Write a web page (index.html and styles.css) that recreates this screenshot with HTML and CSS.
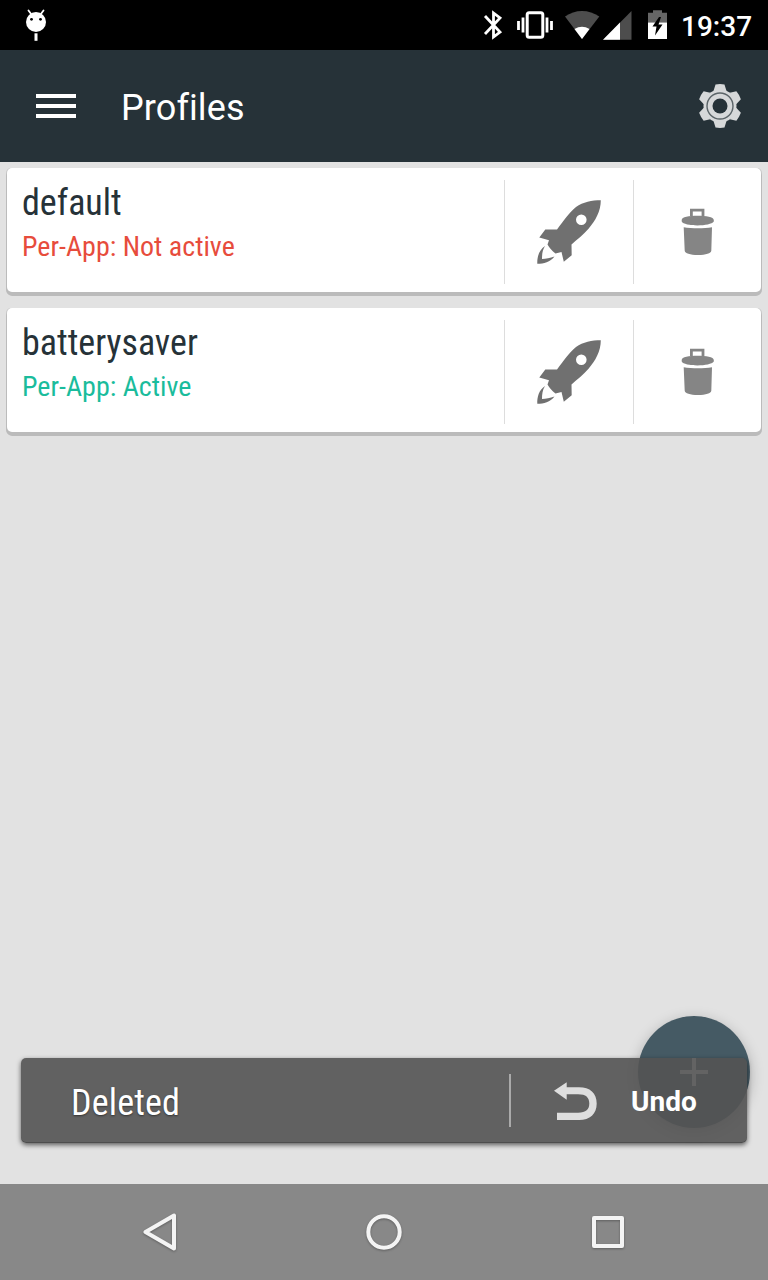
FILE: index.html
```html
<!DOCTYPE html>
<html lang="en">
<head>
<meta charset="utf-8">
<title>Profiles</title>
<link rel="stylesheet" href="styles.css">
</head>
<body>
<svg class="symbols" aria-hidden="true">
  <symbol id="rocket" viewBox="0 0 64 64">
    <path fill-rule="evenodd" d="M63.8 0.300C55 0.300 46 2 39 7C33 12 27 20 20 29.600L8.300 29.600L2.300 37.600L12 40.200L10.500 44.600C12.500 48 15 51 18.500 53.400L24.500 52L26.800 61.800L34.700 55.300L34.500 44.500C40 39.500 46 35 51.300 29C58.500 21 63.800 11 63.800 0.300ZM44.300 14.400A5.300 5.300 0 1 1 44.300 25A5.300 5.300 0 1 1 44.300 14.400Z"/>
    <path d="M8 46C2 50 0 57 0.300 63.800C7 63.800 13 62 17.500 56.500C13 58.200 9 58.700 5 59C5 54 5.500 50 8 46Z"/>
  </symbol>
  <symbol id="trash" viewBox="0 0 34 48">
    <path d="M10.400 8V2.100H22V8" fill="none" stroke="#858585" stroke-width="2.800"/>
    <path d="M.7 12C.7 9 8 7.700 16.500 7.700S32.800 9 32.800 12V13.500C31 16 24 17.400 16.500 17.400S2 16 .7 13.500ZM2.700 19.200C11 20.600 23 20.600 31 19.200L30.300 42.800C30 45.300 25 47 17 47S4 45.300 3.700 42.800Z"/>
  </symbol>
</svg>
<div class="screen">
  <header class="status-bar">
    <svg class="droid" width="24" height="34" viewBox="0 0 24 34" fill="#fff">
      <path d="M4.500 2.500L7.500 6.500M19.500 2.500L16.500 6.500" stroke="#fff" stroke-width="1.800" stroke-linecap="round"/>
      <circle cx="12" cy="14" r="10"/>
      <circle cx="7.500" cy="11.300" r="1.400" fill="#000"/><circle cx="16.500" cy="11.300" r="1.400" fill="#000"/>
      <rect x="10.500" y="25.300" width="3" height="7.500"/>
    </svg>
    <svg width="190" height="50" viewBox="480 0 190 50" fill="none">
      <path d="M485 16L500 32L493.500 37V13L500 18L485 34" stroke="#fff" stroke-width="2.800"/>
      <rect x="527.200" y="12.800" width="15.600" height="24.400" rx="2" stroke="#fff" stroke-width="3"/>
      <path d="M518.500 21V30M551.500 21V30M523 17.500V32.500M547 17.500V32.500" stroke="#fff" stroke-width="2.800"/>
      <path d="M582 39L565 16.500C575 9 589 9 599.300 16.500Z" fill="#4d4d4d"/>
      <path d="M582 39L574.500 29Q582 24.500 589.500 29Z" fill="#fff"/>
      <path d="M603 39.700L631.500 11V39.700Z" fill="#4d4d4d"/>
      <path d="M603 39.700L620 22.500V39.700Z" fill="#fff"/>
      <path d="M648 22.700V12.700H653V10.300H662V12.700H667V22.700Z" fill="#666"/>
      <path d="M648 22.500H667V39H648Z" fill="#fff"/>
      <path d="M659 17L652.500 26.500H656.500L655 35.500L662.500 24.500H658.500L661 17Z" fill="#000"/>
    </svg>
    <time class="clock">19:37</time>
  </header>
  <div class="app-bar">
    <div class="menu"><i></i><i></i><i></i></div>
    <h1>Profiles</h1>
    <svg class="gear" width="46" height="46" viewBox="-23 -23 46 46" fill="#d6d8d9">
      <circle r="16.500"/>
      <path id="tooth" d="M-6.500 -15L-4.500 -21.500Q0 -22.300 4.500 -21.500L6.500 -15Z"/>
      <use href="#tooth" transform="rotate(60)"/><use href="#tooth" transform="rotate(120)"/>
      <use href="#tooth" transform="rotate(180)"/><use href="#tooth" transform="rotate(240)"/>
      <use href="#tooth" transform="rotate(300)"/>
      <circle r="13" fill="none" stroke="#5b6468" stroke-width="1.400"/>
      <circle r="7.500" fill="#263238"/>
    </svg>
  </div>
  <main class="profiles">
    <article class="card">
      <div class="info"><h2>default</h2><p class="inactive">Per-App: Not active</p></div>
      <div class="action"><svg class="rocket"><use href="#rocket"/></svg></div>
      <div class="action"><svg class="trash"><use href="#trash"/></svg></div>
    </article>
    <article class="card">
      <div class="info"><h2>batterysaver</h2><p class="active">Per-App: Active</p></div>
      <div class="action"><svg class="rocket"><use href="#rocket"/></svg></div>
      <div class="action"><svg class="trash"><use href="#trash"/></svg></div>
    </article>
  </main>
  <div class="fab"><svg width="28" height="28" viewBox="0 0 28 28"><path d="M14 0V28M0 14H28" stroke="#fff" stroke-width="4"/></svg></div>
  <div class="toast">
    <span class="message">Deleted</span>
    <div class="undo">
      <svg width="44" height="40" viewBox="553 1081 44 40"><path fill="#dedede" d="M554 1090.700L566.700 1082.300V1087.300H579C590 1087.300 596.700 1093 596.700 1103.500S590 1120 579 1120H557V1112.700H578C586 1112.700 589.300 1109.500 589.300 1103.500S586 1094.300 578 1094.300H566.700V1099.700Z"/></svg>
      <b>Undo</b>
    </div>
  </div>
  <nav class="nav-bar">
    <svg width="768" height="96" viewBox="0 1184 768 96" fill="none" stroke="#f4f4f4" stroke-width="4" stroke-linejoin="round">
      <path d="M145.500 1232L174 1215.500V1248.500Z"/>
      <circle cx="384" cy="1232" r="15.700"/>
      <rect x="594" y="1218" width="28" height="28"/>
    </svg>
  </nav>
</div>
</body>
</html>
```
FILE: styles.css
```css
* { box-sizing: border-box; margin: 0; }
body { font-family: Roboto, sans-serif; }
svg { display: block; flex: none; }
.symbols { position: absolute; width: 0; height: 0; }
.screen {
  position: relative;
  display: flex;
  flex-direction: column;
  width: 768px;
  height: 1280px;
  overflow: hidden;
  background: #e2e2e2;
}
.status-bar {
  display: flex;
  align-items: center;
  height: 50px;
  padding: 0 16px 0 24px;
  background: #000;
}
.droid { margin-right: 432px; }
.clock {
  margin-left: 11px;
  color: #fff;
  font-size: 28px;
  font-weight: 500;
  line-height: 50px;
  padding-top: 4px;
}
.app-bar {
  display: flex;
  align-items: center;
  height: 112px;
  padding: 0 25px 0 36px;
  background: #263238;
}
.menu { display: flex; flex-direction: column; gap: 6px; width: 40px; }
.menu i { height: 4px; background: #fff; }
.app-bar h1 {
  flex: 1;
  margin-left: 45px;
  padding-top: 3px;
  color: #fff;
  font-size: 36px;
  font-weight: 400;
  letter-spacing: .1px;
  font-variant-ligatures: common-ligatures;
}
.profiles { flex: 1; padding: 6px 7px; }
.card {
  display: flex;
  height: 124px;
  margin-bottom: 16px;
  border-radius: 5px;
  background: #fff;
  box-shadow: 0 4px 0 #bbb, 1px 3px 0 #bbb, -1px 3px 0 #bbb, 1px 0 0 #c8c8c8, -1px 0 0 #c8c8c8;
}
.info {
  flex: 1;
  padding: 14px 0 0 15px;
  font-family: "Roboto Condensed", Roboto, sans-serif;
  font-stretch: condensed;
}
.info h2 { color: #263238; font-size: 36px; font-weight: 400; line-height: 42px; }
.info p { font-size: 28px; line-height: 33px; margin-top: 6px; }
.inactive { color: #e74c3c; }
.active { color: #1abc9c; }
.action {
  display: flex;
  justify-content: center;
  width: 129px;
  height: 104px;
  margin-top: 12px;
  padding-top: 20px;
  border-left: 1px solid #ddd;
}
.action:last-child { width: 128px; padding-top: 28px; }
.rocket { width: 64px; height: 64px; fill: #707070; }
.trash { width: 34px; height: 48px; fill: #858585; }
.fab {
  position: absolute;
  left: 638px;
  top: 1016px;
  display: flex;
  align-items: center;
  justify-content: center;
  width: 112px;
  height: 112px;
  border-radius: 50%;
  background: #455a64;
  box-shadow: 0 4px 14px rgba(0, 0, 0, .25);
}
.toast {
  position: absolute;
  left: 21px;
  top: 1058px;
  display: flex;
  align-items: center;
  width: 726px;
  height: 85px;
  padding-left: 50px;
  border-radius: 5px;
  background: rgba(84, 84, 84, .91);
  box-shadow: 0 2px 5px rgba(0, 0, 0, .6), inset 0 -1px 0 rgba(0, 0, 0, .2);
  color: #fff;
}
.message {
  flex: 1;
  padding-top: 4px;
  font-family: "Roboto Condensed", Roboto, sans-serif;
  font-stretch: condensed;
  font-size: 36px;
  letter-spacing: .15px;
  text-shadow: 0 1px 2px #333;
}
.undo {
  display: flex;
  align-items: center;
  width: 238px;
  height: 53px;
  padding-left: 42px;
  border-left: 2px solid #aaa;
}
.undo b { margin-left: 34px; padding-top: 2px; font-size: 28px; }
.nav-bar { height: 96px; background: #888; }
.nav-bar svg { filter: drop-shadow(0 1px 1px rgba(0, 0, 0, .3)); }
```
